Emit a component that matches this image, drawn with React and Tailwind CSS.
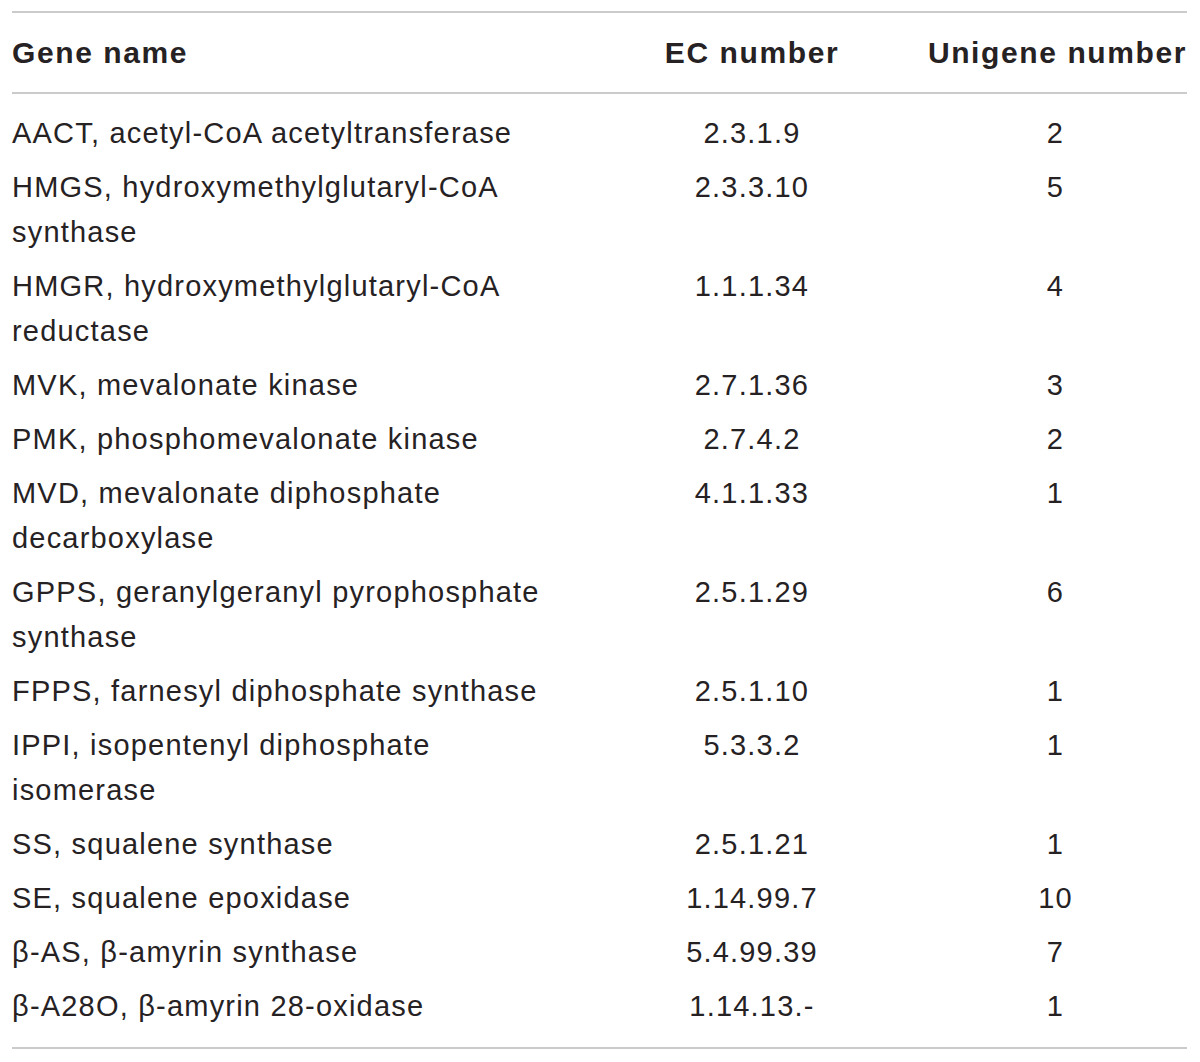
import React from 'react';

const ROWS = [
  { name: ['AACT, acetyl-CoA acetyltransferase'], ec: '2.3.1.9', count: '2' },
  { name: ['HMGS, hydroxymethylglutaryl-CoA', 'synthase'], ec: '2.3.3.10', count: '5' },
  { name: ['HMGR, hydroxymethylglutaryl-CoA', 'reductase'], ec: '1.1.1.34', count: '4' },
  { name: ['MVK, mevalonate kinase'], ec: '2.7.1.36', count: '3' },
  { name: ['PMK, phosphomevalonate kinase'], ec: '2.7.4.2', count: '2' },
  { name: ['MVD, mevalonate diphosphate', 'decarboxylase'], ec: '4.1.1.33', count: '1' },
  { name: ['GPPS, geranylgeranyl pyrophosphate', 'synthase'], ec: '2.5.1.29', count: '6' },
  { name: ['FPPS, farnesyl diphosphate synthase'], ec: '2.5.1.10', count: '1' },
  { name: ['IPPI, isopentenyl diphosphate', 'isomerase'], ec: '5.3.3.2', count: '1' },
  { name: ['SS, squalene synthase'], ec: '2.5.1.21', count: '1' },
  { name: ['SE, squalene epoxidase'], ec: '1.14.99.7', count: '10' },
  { name: ['β-AS, β-amyrin synthase'], ec: '5.4.99.39', count: '7' },
  { name: ['β-A28O, β-amyrin 28-oxidase'], ec: '1.14.13.-', count: '1' },
];

const GRID = 'grid grid-cols-[568px_264px_1fr] gap-x-[40px]';

const Rule = () => <div className="h-[2px] w-full bg-[#cbcbcb]" />;

export default function App() {
  return (
    <div className="min-h-screen bg-white pt-[11px] font-['Liberation_Sans',Arial,sans-serif] text-[#262224]">
      <div className="ml-[12px] w-[1175px]">
        <Rule />

        <div
          className={`${GRID} h-[79px] items-center whitespace-nowrap text-[30px] font-bold tracking-[1.6px]`}
        >
          <div>Gene name</div>
          <div className="text-center">EC number</div>
          <div className="text-right">Unigene number</div>
        </div>

        <Rule />

        <div className="pb-[14px] pt-[12px] text-[29px] leading-[45px] tracking-[1.2px]">
          {ROWS.map((row) => (
            <div key={row.ec} className={`${GRID} pb-[4px] pt-[5px]`}>
              <div className="whitespace-nowrap">
                {row.name.map((line) => (
                  <div key={line}>{line}</div>
                ))}
              </div>
              <div className="text-center">{row.ec}</div>
              <div className="text-center">{row.count}</div>
            </div>
          ))}
        </div>

        <Rule />
      </div>
    </div>
  );
}
